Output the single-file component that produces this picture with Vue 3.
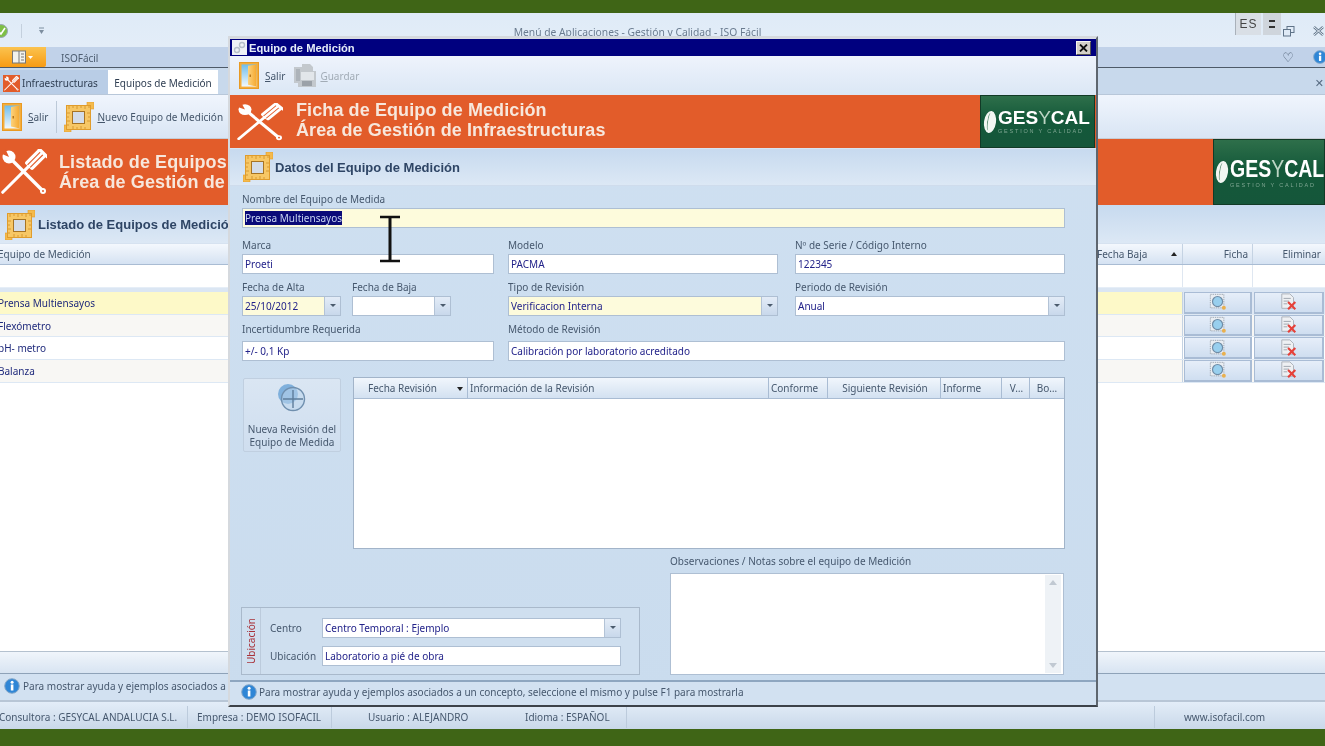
<template>
  <div class="screen">
    <svg class="sprite" width="0" height="0" aria-hidden="true">
      <defs>
        <linearGradient id="doorGlass" x1="0" y1="0" x2="0" y2="1">
          <stop offset="0" stop-color="#6fbdec" />
          <stop offset="1" stop-color="#f2f8fc" />
        </linearGradient>
        <linearGradient id="doorPanel" x1="0" y1="0" x2="1" y2="0">
          <stop offset="0" stop-color="#fbd27e" />
          <stop offset="1" stop-color="#f6a92f" />
        </linearGradient>
        <symbol id="door" viewBox="0 0 20 28" preserveAspectRatio="none">
          <rect x="0.5" y="0.5" width="19" height="27" fill="#f5ad3a" stroke="#e89a24" />
          <rect x="2.5" y="2.5" width="15" height="23" fill="url(#doorGlass)" />
          <path d="M9 4 L17.5 2.5 V25.5 L9 23.5 Z" fill="url(#doorPanel)" />
          <rect x="10.5" y="13" width="1.5" height="2.5" fill="#b8761a" />
        </symbol>
        <symbol id="floppy" viewBox="0 0 24 26">
          <path d="M1 4 H9 V1 H17 L20 4 V8 H23 V24 H5 V20 H1 Z" fill="#c3c8cd" />
          <rect x="8" y="9" width="13" height="8" fill="#e2e6ea" />
          <rect x="9" y="18" width="10" height="5" fill="#9ba1a8" />
          <rect x="3" y="6" width="4" height="12" fill="#adb3b9" />
        </symbol>
        <symbol id="measure" viewBox="0 0 30 30">
          <rect x="23" y="0" width="7" height="7" fill="#f4ba4c" stroke="#e09c2c" stroke-width="0.6" />
          <rect x="0" y="23" width="7" height="7" fill="#f4ba4c" stroke="#e09c2c" stroke-width="0.6" />
          <rect x="2.5" y="3.5" width="24" height="24" fill="#f7c765" stroke="#e09c2c" />
          <rect x="8.5" y="9.5" width="12" height="12" fill="#d3dce8" stroke="#a77424" />
          <path d="M5 4 V7 M9 4 V6 M13 4 V7 M17 4 V6 M21 4 V7 M25 4 V6 M3 11 H6 M3 15 H5 M3 19 H6 M3 23 H5 M9 27 V24 M13 27 V25 M17 27 V24 M21 27 V25 M26 11 H23 M26 15 H24 M26 19 H23" stroke="#cf9127" stroke-width="0.8" fill="none" />
        </symbol>
        <symbol id="tools" viewBox="0 0 46 46" preserveAspectRatio="none">
          <path d="M8 8 L42 42" stroke="#fff" stroke-width="3.4" />
          <circle cx="8" cy="8" r="6.5" fill="#fff" />
          <path d="M-1 4 L8 8 L4 -1 Z" fill="#e25c2a" />
          <circle cx="42" cy="42" r="3" fill="#fff" />
          <circle cx="42" cy="42" r="1" fill="#e25c2a" />
          <g transform="translate(30 15) rotate(45)">
            <rect x="-5.5" y="-16" width="11" height="20" rx="2" fill="#fff" />
            <path d="M-1.9 -15 V3 M1.9 -15 V3" stroke="#e25c2a" stroke-width="1.1" />
            <rect x="-7.5" y="-18" width="15" height="3" rx="1.5" fill="#fff" />
            <path d="M0 4 V40" stroke="#fff" stroke-width="3" stroke-linecap="round" />
          </g>
        </symbol>
        <symbol id="ficha" viewBox="0 0 20 20">
          <rect x="1.5" y="1.5" width="15" height="15" fill="#e9edf2" stroke="#9aa1aa" stroke-dasharray="1.5 1" />
          <circle cx="9.5" cy="9.5" r="5.6" fill="#98cfee" stroke="#6f8ca6" stroke-width="1.3" />
          <circle cx="16.5" cy="16.5" r="2.2" fill="#e9b04e" />
        </symbol>
        <symbol id="borrar" viewBox="0 0 20 20">
          <path d="M2 1 H11 L15 5 V17 H2 Z" fill="#eef0f3" stroke="#a8aeb6" />
          <path d="M4 6 H12 M4 9 H10 M4 12 H8" stroke="#9aa1aa" />
          <path d="M9 10 L17 18 M17 10 L9 18" stroke="#e6413a" stroke-width="2.4" />
        </symbol>
        <symbol id="info" viewBox="0 0 16 16">
          <circle cx="8" cy="8" r="7.3" fill="#2f86d6" stroke="#86a8c9" />
          <rect x="6.8" y="6.5" width="2.6" height="6" fill="#fff" />
          <circle cx="8.1" cy="4.3" r="1.5" fill="#fff" />
        </symbol>
      </defs>
    </svg>

    <div class="green green--top"></div>

    <div class="app">
      <div class="titlebar">
        <svg class="titlebar__check" width="10" height="16" viewBox="0 0 10 16">
          <circle cx="1" cy="8" r="6.5" fill="#7dbf45" stroke="#9aa9b4" />
          <path d="M-2 8 L1 11 L5 5" stroke="#fff" stroke-width="1.6" fill="none" />
        </svg>
        <span class="titlebar__sep"></span>
        <svg class="titlebar__qat" width="7" height="8" viewBox="0 0 7 8">
          <path d="M1 1 H6" stroke="#7d8e9f" />
          <path d="M1 3 H6 L3.5 7 Z" fill="#7d8e9f" />
        </svg>
        <span class="titlebar__title">Menú de Aplicaciones - Gestión y Calidad - ISO Fácil</span>
        <svg class="titlebar__btn" width="13" height="12" viewBox="0 0 13 12">
          <rect x="5" y="1.5" width="7" height="6" fill="none" stroke="#5f7388" />
          <rect x="1.5" y="4.5" width="7" height="6.5" fill="#dfeaf6" stroke="#5f7388" />
        </svg>
        <svg class="titlebar__btn" width="13" height="12" viewBox="0 0 13 12">
          <path d="M2 2 L11 10 M11 2 L2 10" stroke="#66798d" stroke-width="2.4" />
          <path d="M2 2 L11 10 M11 2 L2 10" stroke="#e8f0f8" stroke-width="1" />
        </svg>
      </div>

      <div class="ribbon">
        <div class="ribbon__orb">
          <svg width="22" height="14" viewBox="0 0 22 14">
            <rect x="0.5" y="1" width="13" height="12" fill="#f2f2ee" stroke="#777" />
            <path d="M7 1 V13 M9 4 H12 M9 7 H12 M9 10 H12" stroke="#777" />
            <path d="M16 6 H21 L18.5 9 Z" fill="#fff" />
          </svg>
        </div>
        <span class="ribbon__tab">ISOFácil</span>
        <span class="ribbon__heart">♡</span>
        <svg class="ribbon__help" width="14" height="14"><use href="#info" /></svg>
      </div>

      <div class="doctabs">
        <div class="doctab">
          <svg class="doctab__icon" width="17" height="17" viewBox="0 0 46 46">
            <rect width="46" height="46" fill="#e25c2a" />
            <use href="#tools" x="3" y="3" width="40" height="40" />
          </svg>
          Infraestructuras
        </div>
        <div class="doctab doctab--active">Equipos de Medición</div>
        <span class="doctabs__close">✕</span>
      </div>

      <div class="toolbar">
        <button class="toolbtn">
          <svg width="20" height="28"><use href="#door" /></svg>
          <span><u>S</u>alir</span>
        </button>
        <span class="toolbar__sep"></span>
        <button class="toolbtn toolbtn--tight">
          <svg width="30" height="30"><use href="#measure" /></svg>
          <span><u>N</u>uevo Equipo de Medición</span>
        </button>
      </div>

      <div class="banner banner--main">
        <svg class="banner__tools" width="46" height="46"><use href="#tools" /></svg>
        <div class="banner__text">
          <div>Listado de Equipos de Medición</div>
          <div>Área de Gestión de Infraestructuras</div>
        </div>
        <div class="logo logo--main">
          <span class="logo__mark"></span>
          <div class="logo__words">
            <div class="logo__name">GES<span class="logo__y">Y</span>CAL</div>
            <div class="logo__sub">GESTION Y CALIDAD</div>
          </div>
        </div>
      </div>

      <div class="section section--main">
        <svg width="30" height="30"><use href="#measure" /></svg>
        <span>Listado de Equipos de Medición</span>
      </div>

      <div class="list">
        <div class="list__head">
          <span class="list__cell list__cell--name">Equipo de Medición</span>
          <span class="list__cell list__cell--baja">Fecha Baja <i class="sort-up"></i></span>
          <span class="list__cell list__cell--ficha">Ficha</span>
          <span class="list__cell list__cell--del">Eliminar</span>
        </div>
        <div class="list__filter">
          <span class="list__cell list__cell--name"></span>
          <span class="list__cell list__cell--baja"></span>
          <span class="list__cell list__cell--ficha"></span>
          <span class="list__cell list__cell--del"></span>
        </div>
        <div class="list__gap"></div>
        <div
          v-for="(row, i) in equipos"
          :key="row"
          class="list__row"
          :class="{ 'list__row--sel': i === 0, 'list__row--alt': i % 2 === 1 }"
        >
          <span class="list__cell list__cell--name">{{ row }}</span>
          <span class="list__cell list__cell--baja"></span>
          <span class="list__cell list__cell--ficha"><span class="gridbtn"><svg width="18" height="18"><use href="#ficha" /></svg></span></span>
          <span class="list__cell list__cell--del"><span class="gridbtn"><svg width="18" height="18"><use href="#borrar" /></svg></span></span>
        </div>
      </div>

      <div class="app-footer"></div>
      <div class="helpbar helpbar--main">
        <svg width="16" height="16"><use href="#info" /></svg>
        <span>Para mostrar ayuda y ejemplos asociados a un concepto, seleccione el mismo y pulse F1 para mostrarla</span>
      </div>

      <div class="status">
        <span
          v-for="cell in statusCells"
          :key="cell.text"
          class="status__cell"
          :class="{ 'status__cell--sep': cell.sep }"
          :style="{ width: cell.width + 'px', paddingLeft: cell.pad + 'px' }"
        >{{ cell.text }}</span>
      </div>
    </div>

    <div class="green green--bottom"></div>

    <div class="langbar">
      <span class="langbar__code">ES</span>
      <span class="langbar__arrows"><i></i><i></i></span>
    </div>

    <div class="dialog">
      <div class="dialog__title">
        <svg width="15" height="15" viewBox="0 0 15 15">
          <rect width="15" height="15" fill="#eef1f6" />
          <circle cx="10" cy="5" r="2.5" fill="none" stroke="#b6bfca" stroke-width="1.4" />
          <circle cx="5" cy="10" r="2.5" fill="none" stroke="#b6bfca" stroke-width="1.4" />
        </svg>
        <span class="dialog__name">Equipo de Medición</span>
        <span class="dialog__close">
          <svg width="9" height="8" viewBox="0 0 9 8"><path d="M1 0.5 L8 7.5 M8 0.5 L1 7.5" stroke="#111" stroke-width="1.8" /></svg>
        </span>
      </div>

      <div class="dialog__tools">
        <button class="toolbtn">
          <svg width="20" height="27"><use href="#door" /></svg>
          <span><u>S</u>alir</span>
        </button>
        <button class="toolbtn toolbtn--off">
          <svg width="24" height="26"><use href="#floppy" /></svg>
          <span><u>G</u>uardar</span>
        </button>
      </div>

      <div class="banner banner--dialog">
        <svg class="banner__tools" width="46" height="38"><use href="#tools" /></svg>
        <div class="banner__text">
          <div>Ficha de Equipo de Medición</div>
          <div>Área de Gestión de Infraestructuras</div>
        </div>
        <div class="logo logo--dialog">
          <span class="logo__mark"></span>
          <div class="logo__words">
            <div class="logo__name">GES<span class="logo__y">Y</span>CAL</div>
            <div class="logo__sub">GESTION Y CALIDAD</div>
          </div>
        </div>
      </div>

      <div class="section section--dialog">
        <svg width="30" height="30"><use href="#measure" /></svg>
        <span>Datos del Equipo de Medición</span>
      </div>

      <div class="form">
        <div class="field">
          <label>Nombre del Equipo de Medida</label>
          <div class="input input--req"><span class="input__sel">Prensa Multiensayos</span></div>
        </div>

        <div class="form__row form__row--second">
          <div class="field col-a">
            <label>Marca</label>
            <div class="input">Proeti</div>
          </div>
          <div class="field col-b">
            <label>Modelo</label>
            <div class="input">PACMA</div>
          </div>
          <div class="field col-c">
            <label>Nº de Serie / Código Interno</label>
            <div class="input">122345</div>
          </div>
        </div>

        <div class="form__row">
          <div class="col-a col-a--split">
            <div class="field date">
              <label>Fecha de Alta</label>
              <div class="input input--req input--combo">25/10/2012<span class="drop"></span></div>
            </div>
            <div class="field date">
              <label>Fecha de Baja</label>
              <div class="input input--combo"><span class="drop"></span></div>
            </div>
          </div>
          <div class="field col-b">
            <label>Tipo de Revisión</label>
            <div class="input input--req input--combo">Verificacion Interna<span class="drop"></span></div>
          </div>
          <div class="field col-c">
            <label>Periodo de Revisión</label>
            <div class="input input--combo">Anual<span class="drop"></span></div>
          </div>
        </div>

        <div class="form__row">
          <div class="field field--loose col-a">
            <label>Incertidumbre Requerida</label>
            <div class="input">+/- 0,1 Kp</div>
          </div>
          <div class="field field--loose col-wide">
            <label>Método de Revisión</label>
            <div class="input">Calibración por laboratorio acreditado</div>
          </div>
        </div>

        <div class="revisions">
          <button class="newrev">
            <svg width="32" height="32" viewBox="0 0 32 32">
              <circle cx="13" cy="12" r="10" fill="#7fb0dc" />
              <circle cx="18" cy="17" r="11.5" fill="#bcd6ec" fill-opacity="0.55" stroke="#6f8fae" stroke-width="1.4" />
              <path d="M18 8 V26 M8 17 H28" stroke="#5e7d9c" stroke-width="1.4" />
            </svg>
            <span>Nueva Revisión del<br />Equipo de Medida</span>
          </button>
          <div class="revgrid">
            <div class="revgrid__head">
              <span
                v-for="col in revColumns"
                :key="col.title"
                class="revgrid__col"
                :class="[col.cls, { 'is-sorted': col.sorted }]"
                :style="{ width: col.width + 'px' }"
              >{{ col.title }}<i v-if="col.sorted" class="sort-down"></i></span>
            </div>
          </div>
        </div>

        <div class="form__bottom">
          <div class="place">
            <div class="place__tag"><span>Ubicación</span></div>
            <div class="place__fields">
              <div class="place__row">
                <label>Centro</label>
                <div class="input input--combo">Centro Temporal : Ejemplo<span class="drop"></span></div>
              </div>
              <div class="place__row">
                <label>Ubicación</label>
                <div class="input">Laboratorio a pié de obra</div>
              </div>
            </div>
          </div>
          <div class="notes">
            <label>Observaciones / Notas sobre el equipo de Medición</label>
            <div class="notes__box">
              <div class="notes__scroll"><i class="scroll-up"></i><i class="scroll-down"></i></div>
            </div>
          </div>
        </div>
      </div>

      <div class="helpbar helpbar--dialog">
        <svg width="16" height="16"><use href="#info" /></svg>
        <span>Para mostrar ayuda y ejemplos asociados a un concepto, seleccione el mismo y pulse F1 para mostrarla</span>
      </div>
    </div>

    <svg class="ibeam" width="24" height="48" viewBox="0 0 24 48">
      <path d="M2 2 H22 M2 46 H22" stroke="#111" stroke-width="2.4" fill="none" />
      <path d="M12 2 V46" stroke="#111" stroke-width="3" fill="none" />
    </svg>
  </div>
</template>

<script setup>
const equipos = ['Prensa Multiensayos', 'Flexómetro', 'pH- metro', 'Balanza']

const statusCells = [
  { text: 'Consultora : GESYCAL ANDALUCIA S.L.', width: 188, pad: 0, sep: true },
  { text: 'Empresa : DEMO ISOFACIL', width: 144, pad: 9, sep: true },
  { text: 'Usuario : ALEJANDRO', width: 157, pad: 36 },
  { text: 'Idioma : ESPAÑOL', width: 138, pad: 36, sep: true },
  { text: '', width: 528, pad: 0, sep: true },
  { text: 'www.isofacil.com', width: 170, pad: 29 },
]

const revColumns = [
  { title: 'Fecha Revisión', width: 114, cls: 'is-center', sorted: true },
  { title: 'Información de la Revisión', width: 301 },
  { title: 'Conforme', width: 59 },
  { title: 'Siguiente Revisión', width: 113, cls: 'is-center' },
  { title: 'Informe', width: 61 },
  { title: 'V…', width: 28, cls: 'is-center' },
  { title: 'Bo…', width: 32, cls: 'is-center' },
]
</script>

<style>
html, body {
  margin: 0;
  overflow: hidden;
}
</style>

<style scoped>
.screen {
  position: relative;
  width: 1325px;
  height: 746px;
  display: flex;
  flex-direction: column;
  overflow: hidden;
  background: #3f6516;
  font-family: "Noto Sans", "DejaVu Sans", sans-serif;
  font-size: 10px;
  color: #46586e;
  filter: blur(0.35px);
}

.sprite {
  position: absolute;
}

button {
  font: inherit;
  color: inherit;
}

.green {
  flex: none;
  background: #3f6516;
}

.green--top {
  height: 13px;
}

.green--bottom {
  height: 17px;
}

.app {
  flex: 1;
  display: flex;
  flex-direction: column;
  min-height: 0;
  background: #fff;
}

.titlebar {
  height: 34px;
  display: flex;
  align-items: center;
  gap: 8px;
  box-sizing: border-box;
  padding-top: 2px;
  background: linear-gradient(#dfebf7, #e3edf8);
}

.titlebar__sep {
  width: 1px;
  height: 14px;
  margin-left: 3px;
  background: #c4d0dd;
}

.titlebar__qat {
  margin-left: 8px;
}

.titlebar__title {
  flex: 1;
  text-align: center;
  margin-right: 40px;
  font-size: 10.3px;
  color: #6b7c90;
  transform: translateY(1px);
}

.titlebar__btn {
  margin-left: 12px;
}

.titlebar__btn + .titlebar__btn {
  margin-left: 9px;
}

.ribbon {
  height: 21px;
  display: flex;
  align-items: center;
  box-sizing: border-box;
  border-bottom: 1px solid #4e5a68;
  background: #c1d2e9;
}

.ribbon__orb {
  width: 46px;
  height: 20px;
  display: flex;
  align-items: center;
  justify-content: center;
  background: linear-gradient(#fbc34f, #f79b14);
  border-radius: 0 0 2px 0;
}

.ribbon__tab {
  margin-left: 15px;
  padding-top: 1px;
  flex: 1;
  color: #4d5d70;
}

.ribbon__heart {
  margin-right: 19px;
  font-size: 13px;
  color: #4f6076;
}

.ribbon__help {
  margin-right: -2px;
  flex: none;
}

.doctabs {
  height: 27px;
  display: flex;
  align-items: stretch;
  box-sizing: border-box;
  padding-top: 2px;
  border-bottom: 1px solid #b8c7d9;
  background: #c8d9ec;
}

.doctab {
  width: 108px;
  display: flex;
  align-items: center;
  gap: 2px;
  padding-left: 3px;
  padding-top: 2px;
  box-sizing: border-box;
  background: #b9cde6;
  color: #2f3e52;
}

.doctab--active {
  width: 110px;
  justify-content: center;
  background: #fff;
  padding-left: 0;
}

.doctab__icon {
  flex: none;
}

.doctabs__close {
  margin: auto 0 auto auto;
  padding-right: 1px;
  font-size: 11px;
  font-weight: 700;
  color: #566a80;
}

.toolbar {
  height: 44px;
  display: flex;
  align-items: center;
  box-sizing: border-box;
  padding-left: 2px;
  border-bottom: 1px solid #c6ccd4;
  background: linear-gradient(#f0f5fd, #d9e5f4);
}

.toolbar__sep {
  width: 1px;
  height: 32px;
  margin: 0 7px 0 8px;
  background: #bcc9d8;
}

.toolbtn {
  display: flex;
  align-items: center;
  gap: 6px;
  padding: 0;
  border: 0;
  background: none;
  color: #45566b;
}

.toolbtn--tight {
  gap: 3px;
}

.toolbtn--off {
  gap: 3px;
  color: #a2acb6;
}

.banner {
  flex: none;
  display: flex;
  align-items: center;
  overflow: hidden;
  background: #e25c2a;
  font-family: "Liberation Sans", Arial, sans-serif;
  font-weight: 700;
  color: #f7e7dc;
  white-space: nowrap;
}

.banner--main {
  height: 66px;
  font-size: 18px;
  line-height: 20px;
}

.banner--main .banner__tools {
  margin-left: 1px;
}

.banner--main .banner__text {
  margin-left: 12px;
  letter-spacing: 0.1px;
}

.banner--dialog {
  height: 53px;
  font-size: 18px;
  line-height: 20px;
  padding-bottom: 3px;
  box-sizing: border-box;
}

.banner--dialog .banner__tools {
  margin-left: 7px;
  margin-top: 3px;
}

.banner--dialog .banner__text {
  margin-left: 13px;
  letter-spacing: 0.1px;
}

.banner__text {
  flex: 1;
}

.logo {
  flex: none;
  width: 115px;
  align-self: stretch;
  display: flex;
  align-items: center;
  box-sizing: border-box;
  border: 1px solid #123a26;
  background: linear-gradient(#2e6f4a, #14593a 45%, #15563a);
  color: #fff;
}

.logo--main {
  width: 112px;
  padding-left: 2px;
}

.logo--dialog {
  margin: 0 1px -3px 0;
  padding-left: 3px;
}

.logo__mark {
  position: relative;
  flex: none;
  width: 12px;
  height: 22px;
  border-radius: 50%;
  background: #f2f6f2;
  transform: rotate(8deg);
}

.logo__mark::after {
  content: "";
  position: absolute;
  left: 3px;
  top: 2px;
  width: 5px;
  height: 18px;
  box-sizing: border-box;
  border-left: 1px solid #5f8f75;
  border-radius: 50%;
}

.logo__words {
  margin-left: 2px;
}

.logo__name {
  font-size: 19.5px;
  line-height: 20px;
}

.logo--dialog .logo__name {
  font-size: 19px;
}

.logo--main .logo__name {
  line-height: 26px;
  transform: scaleY(1.2);
}

.logo__y {
  font-weight: 400;
  color: #bcd5c4;
}

.logo__sub {
  font-size: 5.5px;
  line-height: 7px;
  font-weight: 400;
  letter-spacing: 1.8px;
  color: #7fa692;
}

.section {
  flex: none;
  display: flex;
  align-items: center;
  box-sizing: border-box;
  font-family: "Liberation Sans", Arial, sans-serif;
  font-weight: 700;
  font-size: 13px;
  white-space: nowrap;
  color: #2e4565;
  background: linear-gradient(#c7daef, #dce8f5);
}

.section--main {
  height: 38px;
  gap: 3px;
  padding: 1px 0 0 5px;
}

.section--dialog {
  height: 38px;
  gap: 2px;
  padding-left: 13px;
  border-top: 1px solid #d8e4f2;
  border-bottom: 1px solid #cfdcec;
}

.list {
  flex: 1;
  min-height: 0;
  background: #fff;
  border-top: 1px solid #d6e2f0;
}

.list__head {
  height: 21px;
  display: flex;
  box-sizing: border-box;
  border-bottom: 1px solid #a9bcd3;
  background: linear-gradient(#f4f8fd, #d5e2f2);
}

.list__filter {
  height: 22px;
  display: flex;
  background: #fff;
}

.list__gap {
  height: 5px;
  background: #dbe6f3;
  border-top: 1px solid #e6eef7;
  box-sizing: border-box;
}

.list__row {
  height: 22.7px;
  display: flex;
  box-sizing: border-box;
  border-bottom: 1px solid #dde8f4;
  color: #1f2a7c;
}

.list__row--alt {
  background: #f8f7f4;
}

.list__row--sel {
  background: #fdf9c8;
}

.list__cell {
  display: flex;
  align-items: center;
  box-sizing: border-box;
  flex: none;
  white-space: nowrap;
}

.list__cell--name {
  flex: 1;
  text-indent: -2px;
}

.list__cell--baja {
  width: 86px;
  gap: 14px;
  border-right: 1px solid #c5d3e3;
}

.list__cell--ficha {
  width: 70px;
  justify-content: flex-end;
  padding-right: 4px;
  border-right: 1px solid #c5d3e3;
}

.list__cell--del {
  width: 72px;
  justify-content: flex-end;
  padding-right: 4px;
}

.list__filter .list__cell {
  border-color: #dfe7f1;
}

.list__row .list__cell--ficha,
.list__row .list__cell--del {
  padding: 0 1px;
  border: 0;
}

.list__row--sel .list__cell--ficha,
.list__row--sel .list__cell--del {
  background: #dfe8f4;
}

.gridbtn {
  width: 100%;
  height: 100%;
  display: flex;
  align-items: center;
  justify-content: center;
  box-sizing: border-box;
  border: 1px solid #a9bcd5;
  border-width: 1px 2px 2px 1px;
  background: linear-gradient(#e6eef9, #cfdef0);
}

.sort-up {
  width: 0;
  height: 0;
  border: 3.5px solid transparent;
  border-top: 0;
  border-bottom: 4px solid #222;
  margin-left: 10px;
}

.sort-down {
  position: absolute;
  right: 4px;
  top: 9px;
  width: 0;
  height: 0;
  border: 3.5px solid transparent;
  border-bottom: 0;
  border-top: 4px solid #222;
}

.app-footer {
  height: 23px;
  flex: none;
  box-sizing: border-box;
  border-top: 1px solid #b4c1cf;
  border-bottom: 1px solid #8ea2b8;
  background: linear-gradient(#f0f5fb, #d8e4f2);
}

.helpbar {
  flex: none;
  display: flex;
  align-items: center;
  gap: 3px;
  color: #46586e;
  background: #d2e1f1;
  white-space: nowrap;
  overflow: hidden;
}

.helpbar--main {
  height: 28px;
  padding: 0 0 2px 4px;
  box-sizing: border-box;
  border-bottom: 2px solid #b8c6d6;
}

.helpbar--dialog {
  height: 25px;
  gap: 2px;
  padding: 0 0 3px 11px;
  border-top: 2px solid #8ea6c0;
  box-sizing: border-box;
}

.status {
  height: 27px;
  flex: none;
  display: flex;
  align-items: center;
  padding-top: 2px;
  box-sizing: border-box;
  background: linear-gradient(#e3edf8, #c9d8e9);
}

.status__cell {
  height: 22px;
  flex: none;
  display: flex;
  align-items: center;
  box-sizing: border-box;
  white-space: nowrap;
}

.status__cell--sep {
  border-right: 1px solid #bccbdc;
}

.status__cell:first-child {
  text-indent: -1px;
}

.langbar {
  position: absolute;
  left: 1235px;
  top: 13px;
  height: 22px;
  display: flex;
  gap: 2px;
  font-family: "Liberation Sans", Arial, sans-serif;
  font-size: 12px;
  color: #444;
}

.langbar__code {
  width: 26px;
  display: flex;
  align-items: center;
  justify-content: center;
  letter-spacing: 1px;
  background: #d9dfe6;
  border-left: 1px solid #a9b1ba;
  box-sizing: border-box;
}

.langbar__arrows {
  width: 18px;
  display: flex;
  flex-direction: column;
  align-items: center;
  justify-content: center;
  gap: 4px;
  background: #cfd5dc;
}

.langbar__arrows i {
  width: 6px;
  height: 2px;
  background: #333;
}

.dialog {
  position: absolute;
  left: 228px;
  top: 36px;
  width: 870px;
  height: 671px;
  display: flex;
  flex-direction: column;
  box-sizing: border-box;
  border: 2px solid #d5d9de;
  border-right-color: #5e666f;
  border-bottom-color: #3c4249;
  background: linear-gradient(#cfe0f1, #cadcee);
}

.dialog__title {
  flex: none;
  height: 18px;
  display: flex;
  align-items: center;
  gap: 2px;
  padding: 0 5px 0 2px;
  background: #00007f;
  border-top: 1px solid #d8dce2;
  box-sizing: border-box;
  font-family: "Liberation Sans", Arial, sans-serif;
  font-size: 11.2px;
  font-weight: 700;
  color: #e4ecf8;
}

.dialog__name {
  flex: 1;
}

.dialog__close {
  width: 15px;
  height: 14px;
  display: flex;
  align-items: center;
  justify-content: center;
  box-sizing: border-box;
  background: #d4d0c8;
  border: 1px solid #f5f5f0;
  border-right-color: #555;
  border-bottom-color: #555;
}

.dialog__tools {
  flex: none;
  height: 39px;
  display: flex;
  align-items: center;
  gap: 8px;
  padding-left: 9px;
  box-sizing: border-box;
  background: linear-gradient(#eef3fc, #dbe7f5);
}

.form {
  flex: 1;
  min-height: 0;
  display: flex;
  flex-direction: column;
  padding: 7px 31px 0 12px;
}

.form__row {
  display: flex;
  margin-top: 7px;
}

.form__row--second {
  margin-top: 11px;
}

.field {
  display: flex;
  flex-direction: column;
}

.field label,
.notes label {
  height: 13px;
  line-height: 13px;
  margin-bottom: 2px;
  white-space: nowrap;
  color: #46586e;
}

.field--loose label {
  margin-bottom: 5px;
}

.col-a {
  width: 252px;
  margin-right: 14px;
  flex: none;
}

.col-a--split {
  display: flex;
  gap: 11px;
}

.col-b {
  width: 270px;
  margin-right: 17px;
  flex: none;
}

.col-c {
  width: 270px;
  flex: none;
}

.col-wide {
  width: 557px;
  flex: none;
}

.date {
  width: 99px;
}

.input {
  position: relative;
  height: 20px;
  display: flex;
  align-items: center;
  box-sizing: border-box;
  padding-left: 2px;
  background: #fff;
  border: 1px solid #aebfd3;
  color: #23238a;
  white-space: nowrap;
}

.input--req {
  background: #fdfbdc;
}

.input--combo {
  padding-right: 16px;
}

.input__sel {
  background: #0a0a78;
  color: #c7d4f2;
}

.drop {
  position: absolute;
  right: 0;
  top: 0;
  bottom: 0;
  width: 16px;
  box-sizing: border-box;
  border-left: 1px solid #b3c3d6;
  background: linear-gradient(#e3ecf7, #c8d8eb);
}

.drop::after {
  content: "";
  position: absolute;
  left: 5px;
  top: 7px;
  border: 3px solid transparent;
  border-bottom: 0;
  border-top: 3px solid #4b5b6d;
}

.revisions {
  display: flex;
  margin-top: 16px;
}

.newrev {
  width: 98px;
  height: 74px;
  flex: none;
  margin: 1px 12px 0 1px;
  padding: 3px 0 0;
  display: flex;
  flex-direction: column;
  align-items: center;
  gap: 9px;
  box-sizing: border-box;
  border: 1px solid #c0cfe0;
  border-radius: 2px;
  background: linear-gradient(#dae6f3, #cfdeef);
  color: #46586e;
  line-height: 13px;
}

.newrev svg {
  margin-right: 2px;
}

.revgrid {
  width: 712px;
  height: 172px;
  box-sizing: border-box;
  border: 1px solid #a2b4c9;
  background: #fff;
}

.revgrid__head {
  height: 21px;
  display: flex;
  box-sizing: border-box;
  border-bottom: 1px solid #a9bcd3;
  background: linear-gradient(#f1f6fc, #d3e1f1);
}

.revgrid__col {
  position: relative;
  flex: none;
  display: flex;
  align-items: center;
  box-sizing: border-box;
  padding-left: 2px;
  border-right: 1px solid #a9bcd3;
  white-space: nowrap;
}

.revgrid__col:last-child {
  border-right: 0;
}

.is-center {
  justify-content: center;
}

.is-sorted {
  padding-right: 18px;
}

.form__bottom {
  display: flex;
  align-items: flex-end;
  margin-top: 6px;
}

.place {
  width: 399px;
  height: 68px;
  margin-left: -1px;
  display: flex;
  box-sizing: border-box;
  border: 1px solid #a9b9cb;
  background: #cfdfef;
}

.place__tag {
  width: 18px;
  flex: none;
  display: flex;
  align-items: center;
  justify-content: center;
  border-right: 1px solid #bccbdc;
  color: #a8323a;
  font-size: 10px;
}

.place__tag span {
  writing-mode: vertical-rl;
  transform: rotate(180deg);
}

.place__fields {
  flex: 1;
  display: flex;
  flex-direction: column;
  gap: 8px;
  padding: 10px 18px 0 9px;
}

.place__row {
  display: flex;
  align-items: center;
}

.place__row label {
  width: 52px;
  flex: none;
}

.place__row .input {
  flex: 1;
}

.notes {
  width: 394px;
  margin-left: 30px;
  display: flex;
  flex-direction: column;
}

.notes label {
  margin-bottom: 5px;
}

.notes__box {
  height: 102px;
  display: flex;
  justify-content: flex-end;
  box-sizing: border-box;
  border: 1px solid #aebfd3;
  background: #fff;
}

.notes__scroll {
  width: 16px;
  margin: 1px 2px 1px 0;
  display: flex;
  flex-direction: column;
  justify-content: space-between;
  align-items: center;
  padding: 5px 0;
  box-sizing: border-box;
  background: #eef2f6;
}

.scroll-up {
  border: 4px solid transparent;
  border-top: 0;
  border-bottom: 5px solid #c1c9d2;
}

.scroll-down {
  border: 4px solid transparent;
  border-bottom: 0;
  border-top: 5px solid #c1c9d2;
}

.ibeam {
  position: absolute;
  left: 378px;
  top: 215px;
}
</style>
